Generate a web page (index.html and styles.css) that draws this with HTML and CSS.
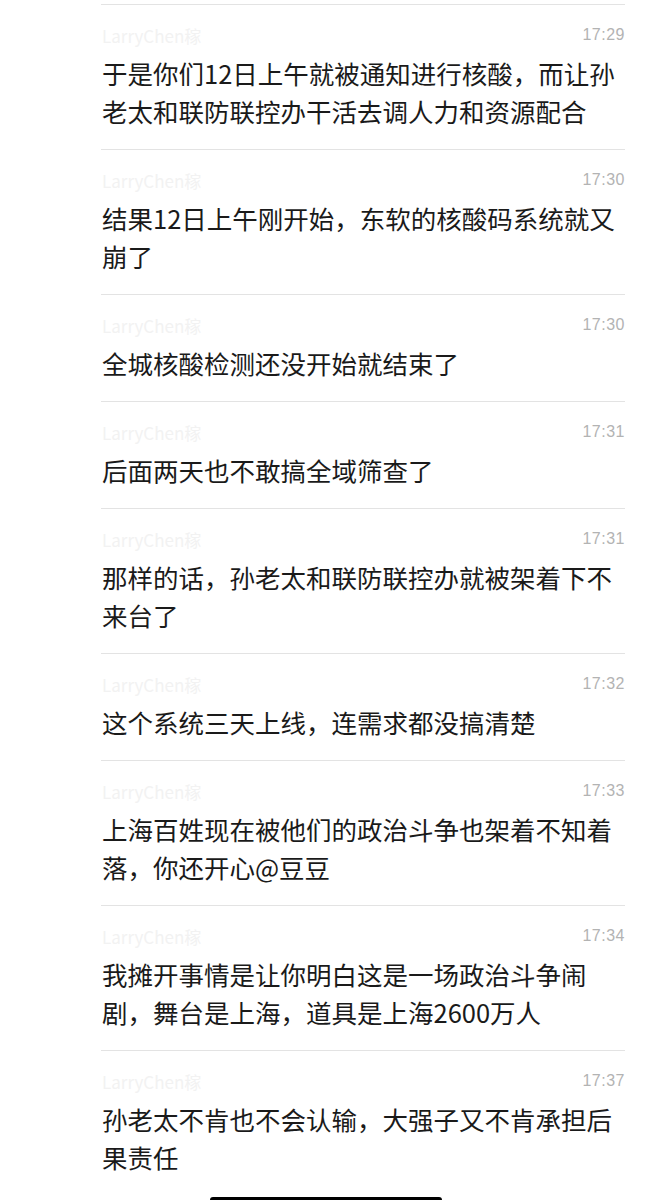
FILE: index.html
```html
<!DOCTYPE html>
<html lang="zh-CN">
<head>
  <meta charset="UTF-8">
  <title>聊天记录</title>
  <link rel="stylesheet" href="styles.css">
</head>
<body>

<div class="chat">
  <div class="msg">
    <div class="meta"><span class="name">LarryChen稼</span><span class="time">17:29</span></div>
    <p class="text">于是你们12日上午就被通知进行核酸，而让孙老太和联防联控办干活去调人力和资源配合</p>
  </div>
  <div class="msg">
    <div class="meta"><span class="name">LarryChen稼</span><span class="time">17:30</span></div>
    <p class="text">结果12日上午刚开始，东软的核酸码系统就又崩了</p>
  </div>
  <div class="msg">
    <div class="meta"><span class="name">LarryChen稼</span><span class="time">17:30</span></div>
    <p class="text">全城核酸检测还没开始就结束了</p>
  </div>
  <div class="msg">
    <div class="meta"><span class="name">LarryChen稼</span><span class="time">17:31</span></div>
    <p class="text">后面两天也不敢搞全域筛查了</p>
  </div>
  <div class="msg">
    <div class="meta"><span class="name">LarryChen稼</span><span class="time">17:31</span></div>
    <p class="text">那样的话，孙老太和联防联控办就被架着下不来台了</p>
  </div>
  <div class="msg">
    <div class="meta"><span class="name">LarryChen稼</span><span class="time">17:32</span></div>
    <p class="text">这个系统三天上线，连需求都没搞清楚</p>
  </div>
  <div class="msg">
    <div class="meta"><span class="name">LarryChen稼</span><span class="time">17:33</span></div>
    <p class="text">上海百姓现在被他们的政治斗争也架着不知着落，你还开心@豆豆</p>
  </div>
  <div class="msg">
    <div class="meta"><span class="name">LarryChen稼</span><span class="time">17:34</span></div>
    <p class="text">我摊开事情是让你明白这是一场政治斗争闹剧，舞台是上海，道具是上海2600万人</p>
  </div>
  <div class="msg">
    <div class="meta"><span class="name">LarryChen稼</span><span class="time">17:37</span></div>
    <p class="text">孙老太不肯也不会认输，大强子又不肯承担后果责任</p>
  </div>
</div>

<div class="home-bar"></div>

</body>
</html>
```

FILE: styles.css
```css
body {
  margin: 0;
  background: #ffffff;
  font-family: "Noto Sans CJK SC", "Noto Sans", sans-serif;
  color: #1a1a1a;
}
.chat {
  padding: 4px 27px 0 101px;
}
.msg {
  border-top: 1px solid #e3e3e3;
  padding: 19px 0 19px;
}
.meta {
  display: flex;
  justify-content: space-between;
  align-items: center;
  height: 22px;
}
.name {
  font-size: 17px;
  color: #f2f2f2;
  padding-left: 1px;
}
.time {
  font-family: "Liberation Sans", sans-serif;
  font-size: 16px;
  letter-spacing: 0.5px;
  color: #b3b3b3;
}
.text {
  margin: 8px 0 0;
  font-size: 25.5px;
  line-height: 38px;
  padding-left: 1px;
}
.home-bar {
  position: fixed;
  left: 210px;
  bottom: -3px;
  width: 232px;
  height: 6px;
  border-radius: 3px;
  background: #000;
}
```
